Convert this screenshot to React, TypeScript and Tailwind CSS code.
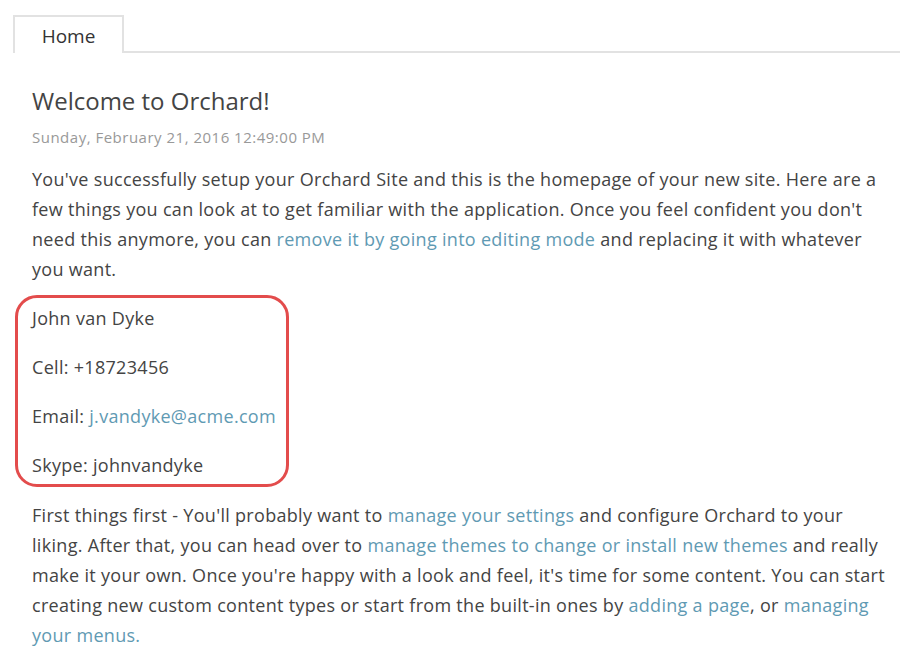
import React from "react";

const A = ({ children }: { children: React.ReactNode }) => (
  <a href="#" className="text-[#5f9ab3] no-underline">
    {children}
  </a>
);

export default function App() {
  return (
    <div
      className="w-[900px] h-[661px] overflow-hidden bg-white text-[#444444]"
      style={{ fontFamily: '"Open Sans", "Liberation Sans", Arial, sans-serif' }}
    >
      <div className="flex items-end pt-[15px] pl-[13px]">
        <div className="w-[111px] h-[38px] border-2 border-b-0 border-[#e2e2e2] flex items-center justify-center text-[19px] text-[#333] pt-[2px]">
          Home
        </div>
        <div className="flex-1 border-b-2 border-[#e2e2e2]" />
      </div>
      <div className="pl-[32px] pr-[10px]">
        <h1 className="text-[24px] leading-[30px] mt-[33px] text-[#444]">Welcome to Orchard!</h1>
        <div className="text-[15px] leading-[20px] mt-[11px] text-[#999] tracking-[0.5px]">
          Sunday, February 21, 2016 12:49:00 PM
        </div>
        <div className="text-[18px] leading-[30px] mt-[17px] whitespace-nowrap tracking-[0.3px]">
          <p>
            You've successfully setup your Orchard Site and this is the homepage of your new site. Here are a
            <br />
            few things you can look at to get familiar with the application. Once you feel confident you don't
            <br />
            need this anymore, you can <A>remove it by going into editing mode</A> and replacing it with whatever
            <br />
            you want.
          </p>
          <div className="relative">
            <div className="absolute left-[-17px] top-[-8px] w-[274px] h-[192px] border-[3px] border-[#e34c4c] rounded-[22px] pointer-events-none" />
            <p className="mt-[19px]">John van Dyke</p>
            <p className="mt-[19px]">Cell: +18723456</p>
            <p className="mt-[19px]">
              Email: <A>j.vandyke@acme.com</A>
            </p>
            <p className="mt-[19px]">Skype: johnvandyke</p>
          </div>
          <p className="mt-[20px]">
            First things first - You'll probably want to <A>manage your settings</A> and configure Orchard to your
            <br />
            liking. After that, you can head over to <A>manage themes to change or install new themes</A> and really
            <br />
            make it your own. Once you're happy with a look and feel, it's time for some content. You can start
            <br />
            creating new custom content types or start from the built-in ones by <A>adding a page</A>, or <A>managing</A>
            <br />
            <A>your menus.</A>
          </p>
        </div>
      </div>
    </div>
  );
}
